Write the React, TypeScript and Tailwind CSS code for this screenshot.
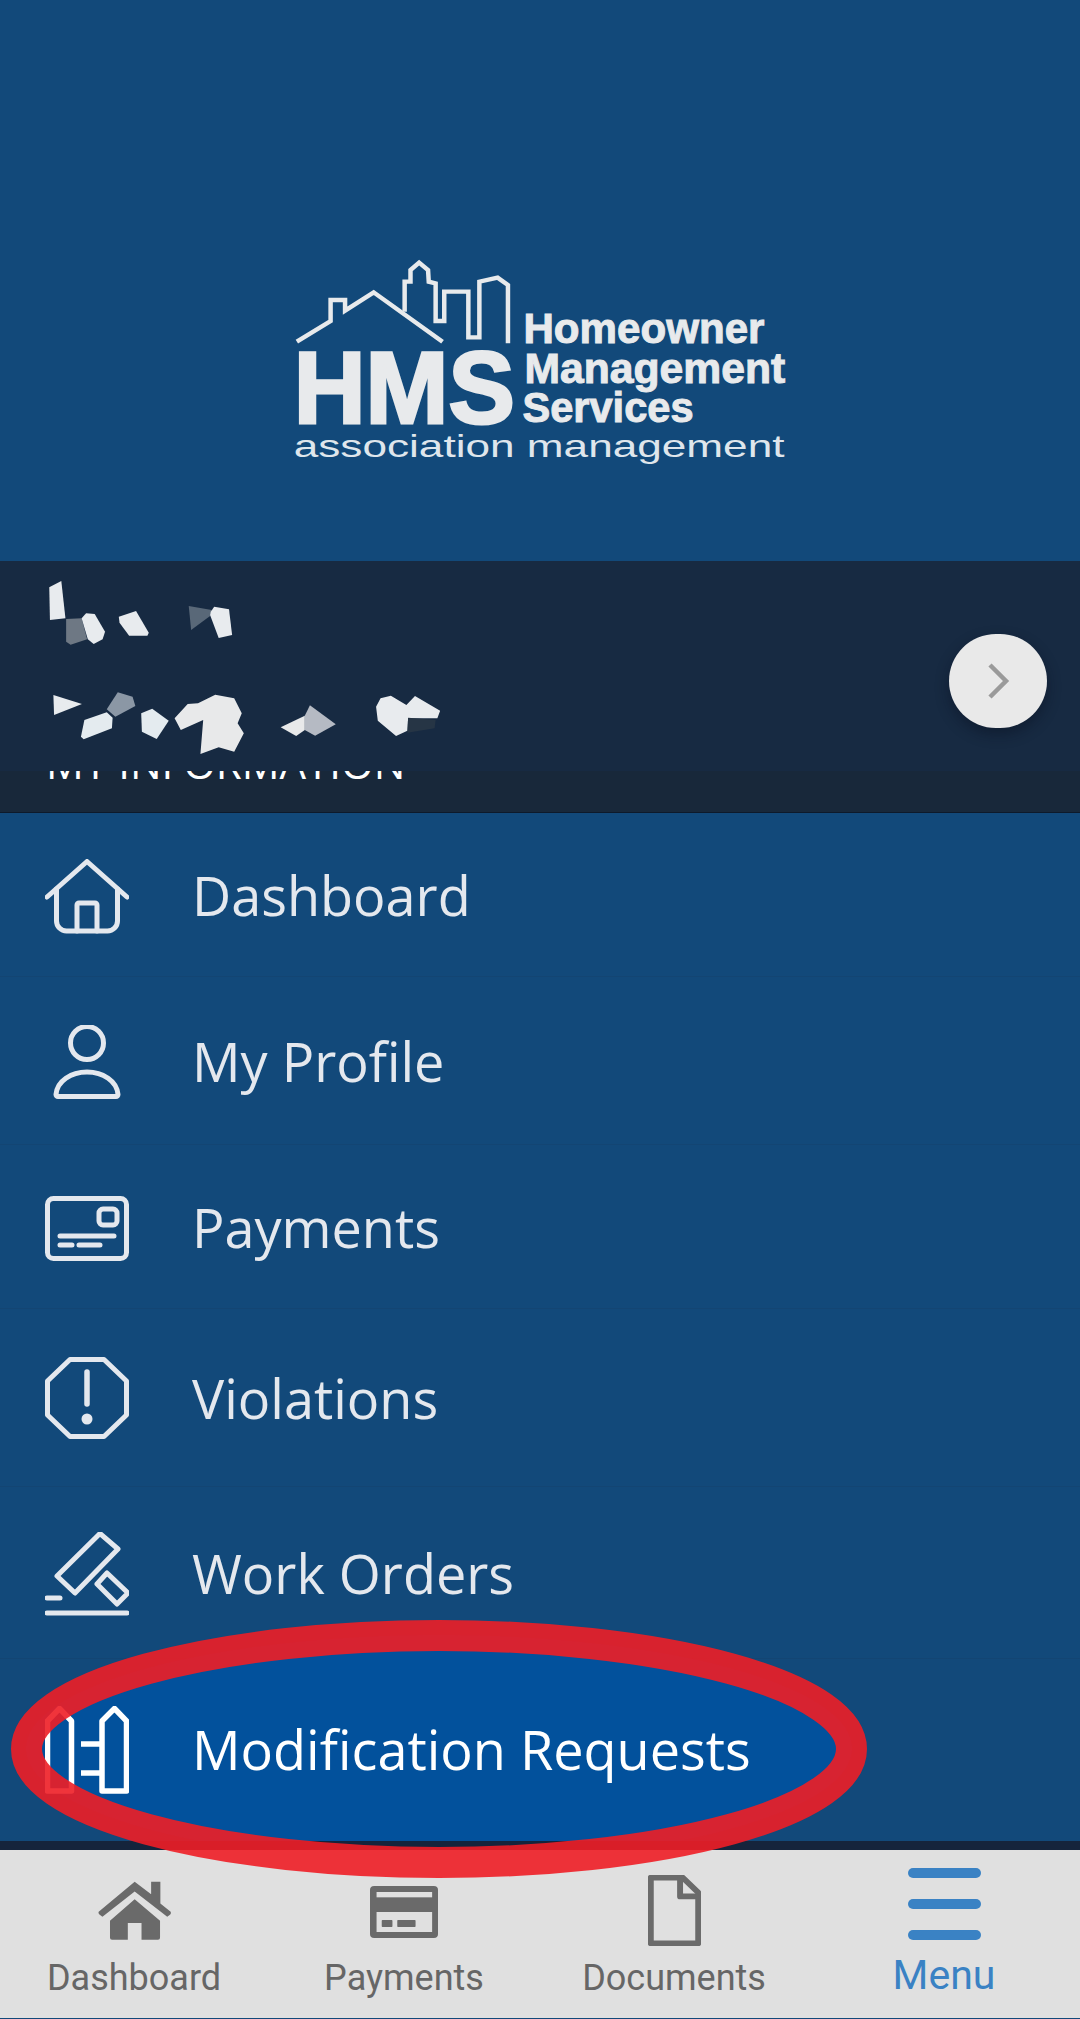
const polys: [string, string][] = [
  ["143,112 178,93 190,205 145,210", "#e8ebee"],
  ["192,207 237,205 253,268 205,284 192,275", "#6e7884"],
  ["237,205 250,190 275,192 305,245 298,268 272,282 255,268", "#e8ebee"],
  ["345,200 395,183 432,248 428,257 375,257 347,218", "#e8ebee"],
  ["548,168 615,180 610,198 555,240", "#596878"],
  ["612,185 622,170 665,178 674,255 635,264 610,195", "#e8ebee"],
  ["155,435 238,462 157,495", "#e8ebee"],
  ["310,478 342,427 385,440 393,468 335,500", "#8b97a5"],
  ["245,510 310,487 327,503 325,535 243,568 235,560", "#e4ebef"],
  ["410,490 442,476 490,512 455,567 412,545", "#e4ebef"],
  ["507,505 545,462 575,460 625,434 680,445 702,490 690,520 708,550 680,605 635,592 582,612 590,510 525,540", "#e8e9ea"],
  ["815,532 885,497 885,540 860,558", "#e8e9ea"],
  ["885,497 900,466 975,523 915,557 885,540", "#b5bac3"],
  ["1092,470 1105,445 1135,437 1180,465 1205,438 1278,482 1270,505 1185,505 1183,542 1150,558 1097,512", "#e8ebee"],
  ["1185,503 1265,510 1262,535 1183,548", "#263545"],
];

function Logo() {
  return (
    <svg width="540" height="240" viewBox="0 0 1568 720" preserveAspectRatio="none" className="block" fontFamily="'Liberation Sans', sans-serif">
      <g fill="none" stroke="#e8eaec" strokeWidth="13">
        <path d="M107 305 L205 243 V180 H247 V212 L330 157 L530 305" />
        <path d="M420 215 V125 H437 V90 L462 68 L488 90 L490 125 L510 130 V243 H535 V155 H605 V292 H637 V125 L690 113 L720 135 V310" />
      </g>
      <g fill="#e8eaec" stroke="#e8eaec" fontWeight="700">
        <text x="98" y="548" fontSize="305" strokeWidth="9" textLength="642" lengthAdjust="spacingAndGlyphs">HMS</text>
        <text x="765" y="310" fontSize="130" strokeWidth="3" textLength="700" lengthAdjust="spacingAndGlyphs">Homeowner</text>
        <text x="768" y="430" fontSize="130" strokeWidth="3" textLength="757" lengthAdjust="spacingAndGlyphs">Management</text>
        <text x="762" y="545" fontSize="130" strokeWidth="3" textLength="497" lengthAdjust="spacingAndGlyphs">Services</text>
      </g>
      <text x="98" y="650" fontSize="96" fill="#dfe6ec" textLength="1425" lengthAdjust="spacingAndGlyphs">association management</text>
    </svg>
  );
}

const lineProps = { fill: "none", stroke: "currentColor", strokeWidth: 5, strokeLinecap: "round", strokeLinejoin: "round" } as const;

function HouseIcon() {
  return (
    <svg width="84" height="75" viewBox="0 0 84 75" {...lineProps}>
      <path d="M2 38 L42 2.5 L82 38" />
      <path d="M11.5 30 V62 a10 10 0 0 0 10 10 H62.5 a10 10 0 0 0 10 -10 V30" />
      <path d="M32 72 V46 a2 2 0 0 1 2 -2 H50 a2 2 0 0 1 2 2 V72" />
    </svg>
  );
}

function PersonIcon() {
  return (
    <svg width="84" height="74" viewBox="0 0 84 74" {...lineProps}>
      <circle cx="42" cy="18" r="16.5" />
      <path d="M13 71.5 H71 a2 2 0 0 0 2 -2 C72 56 58 47 42 47 C26 47 12 56 11 69.5 a2 2 0 0 0 2 2 Z" />
    </svg>
  );
}

function CardIcon() {
  return (
    <svg width="84" height="65" viewBox="0 0 84 65" {...lineProps}>
      <rect x="2.5" y="2.5" width="79" height="60" rx="6" />
      <rect x="54" y="13" width="18" height="16" rx="4" />
      <path d="M15 40 H69 M15 49 H27 M34 49 H55" />
    </svg>
  );
}

function OctagonIcon() {
  return (
    <svg width="84" height="82" viewBox="0 0 84 82" {...lineProps}>
      <path d="M25 2.5 H59 L81.5 24 V58 L59 79.5 H25 L2.5 58 V24 Z" />
      <path d="M42 15 V47" strokeWidth="5.5" />
      <circle cx="42" cy="62" r="5.5" fill="currentColor" stroke="none" />
    </svg>
  );
}

function GavelIcon() {
  return (
    <svg width="84" height="84" viewBox="0 0 84 84" {...lineProps}>
      <path d="M55 1.5 L73 17 L30 61 L12 44 Z" />
      <path d="M52 52 L62 41 L83 61 L72 72 Z" />
      <path d="M2 66 H15" />
      <path d="M2 81 H82" />
    </svg>
  );
}

function FenceIcon() {
  return (
    <svg width="84" height="88" viewBox="0 0 84 88" {...lineProps} strokeWidth={5.5} strokeLinecap="butt">
      <path d="M2.5 85 V15 L14.5 2.5 L26.5 15 V85 Z" />
      <path d="M57 85 V15 L69.5 2.5 L81.5 15 V85 Z" />
      <path d="M36 38 H57 M36 67 H57" />
    </svg>
  );
}

const rows = [
  { label: "Dashboard", icon: <HouseIcon />, h: "h-[164px]", nudge: "pt-[4px]" },
  { label: "My Profile", icon: <PersonIcon />, h: "h-[168px]", nudge: "pt-[2px]" },
  { label: "Payments", icon: <CardIcon />, h: "h-[164px]", nudge: "pt-[4px]" },
  { label: "Violations", icon: <OctagonIcon />, h: "h-[178px]", nudge: "pt-[1px]" },
  { label: "Work Orders", icon: <GavelIcon />, h: "h-[172px]", nudge: "pt-[2px]" },
];

function MenuRow({ label, icon, h, nudge }: { label: string; icon: React.ReactNode; h: string; nudge: string }) {
  return (
    <div className={`${h} flex items-center pl-[45px] text-[#e4e8ee] border-b border-[#134573]`}>
      <div className={`w-[147px] shrink-0 ${nudge}`}>{icon}</div>
      <span className="text-[54px] leading-none">{label}</span>
    </div>
  );
}

const tabs = [
  {
    label: "Dashboard",
    w: "w-[268px]",
    pt: "pt-[31px]",
    icon: (
      <svg width="73" height="59" viewBox="285 185 213 178" preserveAspectRatio="none" fill="#6a6a6a">
        <path d="M392 187 L287 278 Q285 283 290 287 L298 293 L392 217 L487 293 L495 287 Q499 283 497 278 L467 253 V187 H440 V225 Z" />
        <path d="M320 305 L392 240 L466 305 V356 Q466 362 460 362 H412 V312 H372 V362 H326 Q320 362 320 356 Z" />
      </svg>
    ),
  },
  {
    label: "Payments",
    w: "w-[272px]",
    pt: "pt-[36px]",
    icon: (
      <svg width="68" height="52" viewBox="1078 200 197 156" preserveAspectRatio="none">
        <rect x="1078" y="200" width="197" height="156" rx="12" fill="#6a6a6a" />
        <rect x="1097" y="218" width="161" height="16" fill="#e0e0e0" />
        <rect x="1097" y="278" width="161" height="60" fill="#e0e0e0" />
        <rect x="1112" y="302" width="31" height="21" rx="2" fill="#6a6a6a" />
        <rect x="1157" y="302" width="53" height="21" rx="2" fill="#6a6a6a" />
      </svg>
    ),
  },
  {
    label: "Documents",
    w: "w-[268px]",
    pt: "pt-[25px]",
    icon: (
      <svg width="53" height="71" viewBox="315 168 152 212" preserveAspectRatio="none" fill="none" stroke="#6b6b6b" strokeWidth="17" strokeLinejoin="round">
        <path d="M323 176 H415 L459 220 V372 H323 Z" />
        <path d="M407 176 V232 H459" />
      </svg>
    ),
  },
];

export default function App() {
  return (
    <div className="relative w-[1080px] h-[2019px] overflow-hidden bg-[#12497a] font-['Open_Sans',sans-serif]">
      <header className="h-[561px] pl-[260px] pt-[240px]">
        <Logo />
      </header>

      <section className="h-[252px] bg-[#172a42] border-b border-[#0e1a2b]">
        <div className="h-[210px] flex justify-between">
          <svg width="540" height="210" viewBox="0 33 1568 630" preserveAspectRatio="none" className="block">
            {polys.map(([points, fill]) => (
              <polygon key={points} points={points} fill={fill} />
            ))}
          </svg>
          <button className="mt-[73px] mr-[33px] w-[98px] h-[94px] rounded-full bg-[#e9e9e9] flex items-center justify-center shadow-[0_6px_14px_rgba(8,16,30,0.45)]">
            <svg width="24" height="38" viewBox="0 0 24 38" fill="none" stroke="#9a9a9a" strokeWidth="4.5">
              <path d="M4 3 L20 19 L4 35" />
            </svg>
          </button>
        </div>
        <div className="relative h-[41px] overflow-hidden bg-[#18283a]">
          <span className="absolute left-[46px] bottom-[31px] text-[42px] leading-none text-white translate-y-[3px] whitespace-nowrap">
            MY INFORMATION
          </span>
        </div>
      </section>

      <nav className="h-[1028px] overflow-hidden">
        {rows.map((row) => (
          <MenuRow key={row.label} {...row} />
        ))}
        <div className="relative h-[182px] flex items-center pl-[45px] text-white">
          <div className="absolute left-[26px] top-[-24px] w-[826px] h-[227px] rounded-[50%] bg-[#02519c]" />
          <div className="relative w-[147px] shrink-0">
            <FenceIcon />
          </div>
          <span className="relative text-[54px] leading-none whitespace-nowrap -translate-y-[1px]">Modification Requests</span>
        </div>
      </nav>

      <div className="h-[9px] bg-[#15243c]" />

      <footer className="flex h-[168px] bg-[#e0e0e0] font-['Roboto',sans-serif]">
        {tabs.map((tab) => (
          <div key={tab.label} className={`${tab.w} flex flex-col items-center text-[#666]`}>
            <div className={`h-[96px] ${tab.pt}`}>{tab.icon}</div>
            <span className="text-[36px] leading-[64px] whitespace-nowrap">{tab.label}</span>
          </div>
        ))}
        <div className="w-[272px] flex flex-col items-center text-[#3a82c4]">
          <div className="h-[96px] pt-[18px] flex flex-col gap-[21px]">
            <div className="w-[73px] h-[10px] rounded-full bg-[#3a82c4]" />
            <div className="w-[73px] h-[10px] rounded-full bg-[#3a82c4]" />
            <div className="w-[73px] h-[10px] rounded-full bg-[#3a82c4]" />
          </div>
          <span className="text-[41px] leading-[58px]">Menu</span>
        </div>
      </footer>

      {/* red ring drawn on top of the screenshot */}
      <svg className="absolute inset-0 pointer-events-none" width="1080" height="2019" viewBox="0 0 1080 2019">
        <ellipse cx="439" cy="1749" rx="412.5" ry="113.5" fill="none" stroke="rgba(238,30,38,0.9)" strokeWidth="31" />
      </svg>
    </div>
  );
}
